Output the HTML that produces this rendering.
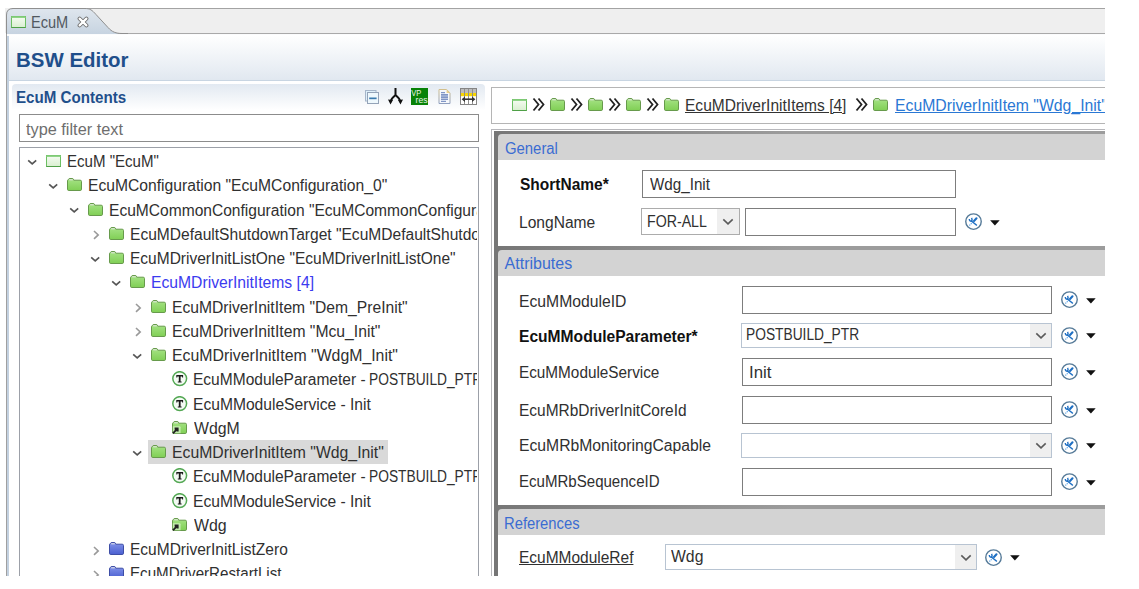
<!DOCTYPE html><html><head><meta charset="utf-8"><style>html,body{margin:0;padding:0;background:#fff;width:1139px;height:589px;overflow:hidden;font-family:"Liberation Sans", sans-serif;} #root{position:relative;width:1139px;height:589px;overflow:hidden} svg{display:block} .t{position:absolute;white-space:pre;transform-origin:0 0}</style></head><body><div id="root">
<div style="position:absolute;left:5px;top:8px;width:1100px;height:25px;background:#efefef"></div>
<div style="position:absolute;left:6px;top:33px;width:1099px;height:1px;background:#a9a9a9"></div>
<div style="position:absolute;left:12px;top:8px;width:1093px;height:1px;background:#a3a3a3"></div>
<svg style="position:absolute;left:6px;top:8px" width="122" height="27" viewBox="0 0 122 27"><defs><linearGradient id="tabg" x1="0" y1="0" x2="0" y2="1"><stop offset="0" stop-color="#dfe6ee"/><stop offset="1" stop-color="#c6d3e0"/></linearGradient></defs><path d="M0 27 L0 7 Q0 0.5 6.5 0.5 L79 0.5 C84 0.5 86 2 90 6.5 L102 19.5 C106 24 110 25.5 116 25.5 L122 25.5 L122 27 Z" fill="url(#tabg)"/><path d="M0.5 27 L0.5 7 Q0.5 0.5 7 0.5 L79 0.5 C84 0.5 86 2 90 6.5 L102 19.5 C106 24 110 25.5 116 25.5 L122 25.5" fill="none" stroke="#8f8f8f" stroke-width="1"/></svg>
<svg style="position:absolute;left:11px;top:16px" width="15" height="12" viewBox="0 0 15 12"><defs><linearGradient id="mg" x1="0" y1="0" x2="0" y2="1"><stop offset="0" stop-color="#f6fcf3"/><stop offset="1" stop-color="#d9efd0"/></linearGradient></defs><rect x="0.5" y="0.5" width="14" height="11" fill="url(#mg)" stroke="#6cbf62"/><rect x="0.5" y="0.5" width="14" height="1.5" fill="#8fd487"/><line x1="0.5" y1="11.5" x2="14.5" y2="11.5" stroke="#4f9f47"/></svg>
<div class="t" style="left:31.09px;top:15px;font-size:16px;line-height:16px;font-weight:400;color:#515860;transform:scaleX(0.9098);">EcuM</div>
<svg style="position:absolute;left:77px;top:16px" width="12" height="12" viewBox="0 0 12 12"><path d="M2.6 2.6 L9.4 9.4 M9.4 2.6 L2.6 9.4" stroke="#6e6e6e" stroke-width="4" stroke-linecap="round"/><path d="M2.6 2.6 L9.4 9.4 M9.4 2.6 L2.6 9.4" stroke="#fff" stroke-width="2.2" stroke-linecap="round"/></svg>
<div style="position:absolute;left:6px;top:34px;width:1px;height:542px;background:#a0a0a0"></div>
<div style="position:absolute;left:7px;top:34px;width:1098px;height:2px;background:#fbfcfd"></div>
<div style="position:absolute;left:7px;top:36px;width:2px;height:540px;background:#c3d1e0"></div>
<div style="position:absolute;left:9px;top:35px;width:1096px;height:45px;background:linear-gradient(#ffffff,#e1e8f0)"></div>
<div style="position:absolute;left:9px;top:80px;width:1096px;height:1px;background:#c8d5e2"></div>
<div class="t" style="left:15.53px;top:49px;font-size:21px;line-height:21px;font-weight:700;color:#1f4f8b;transform:scaleX(0.9736);">BSW Editor</div>
<div style="position:absolute;left:12px;top:84px;width:473px;height:26px;background:linear-gradient(#e2e9f1,#ffffff);border-radius:4px 4px 0 0"></div>
<div class="t" style="left:16.15px;top:90px;font-size:16px;line-height:16px;font-weight:700;color:#1f4f8b;transform:scaleX(0.9459);">EcuM Contents</div>
<svg style="position:absolute;left:365px;top:90px" width="15" height="15" viewBox="0 0 15 15"><rect x="0.5" y="0.5" width="10.5" height="10.5" fill="#dff0fa" stroke="#a6b6ca"/><rect x="2.5" y="2.5" width="11" height="11" fill="#eef8fd" stroke="#94a3b8"/><rect x="4.2" y="7.5" width="7.4" height="1.7" fill="#3b7aae"/></svg>
<svg style="position:absolute;left:388px;top:88px" width="15" height="17" viewBox="0 0 15 17"><path d="M7.5 0 V7 M7.5 7 C5 9 3 11 2.5 14 M7.5 7 C10 9 12 11 12.5 14" fill="none" stroke="#111" stroke-width="2"/><path d="M0 11.5 L2.5 16.5 L5 12 Z M15 11.5 L12.5 16.5 L10 12 Z" fill="#111"/></svg>
<svg style="position:absolute;left:411px;top:88px" width="17" height="17" viewBox="0 0 17 17"><rect width="17" height="17" fill="#078207"/><text x="0.3" y="7.6" font-family="Liberation Sans" font-size="9" fill="#e8f4e8" textLength="10" lengthAdjust="spacingAndGlyphs">VP</text><text x="4.6" y="15.4" font-family="Liberation Sans" font-size="9" fill="#e8f4e8" textLength="12" lengthAdjust="spacingAndGlyphs">res</text></svg>
<svg style="position:absolute;left:438px;top:89px" width="13" height="15" viewBox="0 0 13 15"><defs><linearGradient id="dg" x1="0" y1="0" x2="0" y2="1"><stop offset="0" stop-color="#d2bf8c"/><stop offset="1" stop-color="#8f9fbf"/></linearGradient></defs><path d="M1 0.5 H8.6 L12 3.9 V14.5 H1 Z" fill="#f6f8fc" stroke="url(#dg)"/><path d="M8.6 0.5 V3.9 H12 Z" fill="#e9cf8e"/><path d="M3 3.6 H7 M3 5.6 H10 M3 7.1 H10 M3 8.6 H10 M3 10.4 H10 M3 12.4 H8" stroke="#8196c6" stroke-width="1.3"/></svg>
<svg style="position:absolute;left:460px;top:88px" width="17" height="17" viewBox="0 0 17 17"><rect x="0.5" y="0.5" width="16" height="16" fill="#fff" stroke="#858585"/><rect x="1" y="1" width="15" height="4" fill="#bdbdbd"/><rect x="1" y="5" width="15" height="3.2" fill="#f7d500"/><path d="M4.5 1 V16 M8.5 1 V16 M12.5 1 V16" stroke="#8f8f8f" stroke-width="1"/><path d="M3 11.2 H14" stroke="#333" stroke-width="1.6"/><path d="M1.6 11.2 L5 8.4 V14 Z M15.4 11.2 L12 8.4 V14 Z" fill="#333"/></svg>
<div style="position:absolute;left:19px;top:114px;width:460px;height:28px;border:1px solid #8c8c8c;box-sizing:border-box;background:#fff"></div>
<div class="t" style="left:26.30px;top:122px;font-size:16px;line-height:16px;font-weight:400;color:#6e6e6e;transform:scaleX(1.0188);">type filter text</div>
<div style="position:absolute;left:19px;top:147px;width:460px;height:440px;border:1px solid #9ca0a8;box-sizing:border-box;background:#fff"></div>
<div style="position:absolute;left:20px;top:148px;width:457px;height:428px;overflow:hidden">
<svg style="position:absolute;left:7px;top:11px" width="11" height="7" viewBox="0 0 11 7"><path d="M1.2 1.4 L5.2 4.8 L9.2 1.4" fill="none" stroke="#555" stroke-width="1.7"/></svg>
<svg style="position:absolute;left:26px;top:7px" width="15" height="12" viewBox="0 0 15 12"><defs><linearGradient id="mg" x1="0" y1="0" x2="0" y2="1"><stop offset="0" stop-color="#f6fcf3"/><stop offset="1" stop-color="#d9efd0"/></linearGradient></defs><rect x="0.5" y="0.5" width="14" height="11" fill="url(#mg)" stroke="#6cbf62"/><rect x="0.5" y="0.5" width="14" height="1.5" fill="#8fd487"/><line x1="0.5" y1="11.5" x2="14.5" y2="11.5" stroke="#4f9f47"/></svg>
<div class="t" style="left:46.96px;top:6px;font-size:16px;line-height:16px;font-weight:400;color:#303030;transform:scaleX(0.9414);">EcuM &quot;EcuM&quot;</div>
<svg style="position:absolute;left:28px;top:35px" width="11" height="7" viewBox="0 0 11 7"><path d="M1.2 1.4 L5.2 4.8 L9.2 1.4" fill="none" stroke="#555" stroke-width="1.7"/></svg>
<svg style="position:absolute;left:47px;top:30px" width="15" height="13" viewBox="0 0 15 13"><defs><linearGradient id="fg" x1="0" y1="0" x2="0" y2="1"><stop offset="0" stop-color="#a6e386"/><stop offset="1" stop-color="#80cf55"/></linearGradient></defs><path d="M0.5 2.8 Q0.5 1.6 1.6 1.4 L2.2 0.5 L5.8 0.5 L6.8 2.2 L13.2 2.2 Q14.5 2.2 14.5 3.6 L14.5 11.2 Q14.5 12.5 13.2 12.5 L1.8 12.5 Q0.5 12.5 0.5 11.2 Z" fill="url(#fg)" stroke="#679a4c"/><rect x="2.2" y="1.3" width="3.6" height="1" fill="#e4e4e4"/></svg>
<div class="t" style="left:67.92px;top:30px;font-size:16px;line-height:16px;font-weight:400;color:#303030;transform:scaleX(0.9787);">EcuMConfiguration &quot;EcuMConfiguration_0&quot;</div>
<svg style="position:absolute;left:49px;top:59px" width="11" height="7" viewBox="0 0 11 7"><path d="M1.2 1.4 L5.2 4.8 L9.2 1.4" fill="none" stroke="#555" stroke-width="1.7"/></svg>
<svg style="position:absolute;left:68px;top:55px" width="15" height="13" viewBox="0 0 15 13"><defs><linearGradient id="fg" x1="0" y1="0" x2="0" y2="1"><stop offset="0" stop-color="#a6e386"/><stop offset="1" stop-color="#80cf55"/></linearGradient></defs><path d="M0.5 2.8 Q0.5 1.6 1.6 1.4 L2.2 0.5 L5.8 0.5 L6.8 2.2 L13.2 2.2 Q14.5 2.2 14.5 3.6 L14.5 11.2 Q14.5 12.5 13.2 12.5 L1.8 12.5 Q0.5 12.5 0.5 11.2 Z" fill="url(#fg)" stroke="#679a4c"/><rect x="2.2" y="1.3" width="3.6" height="1" fill="#e4e4e4"/></svg>
<div class="t" style="left:88.93px;top:55px;font-size:16px;line-height:16px;font-weight:400;color:#303030;transform:scaleX(0.9730);">EcuMCommonConfiguration &quot;EcuMCommonConfiguration_0&quot;</div>
<svg style="position:absolute;left:72.5px;top:82px" width="7" height="11" viewBox="0 0 7 11"><path d="M1 1 L5.2 4.9 L1 8.8" fill="none" stroke="#9a9a9a" stroke-width="1.6"/></svg>
<svg style="position:absolute;left:89px;top:79px" width="15" height="13" viewBox="0 0 15 13"><defs><linearGradient id="fg" x1="0" y1="0" x2="0" y2="1"><stop offset="0" stop-color="#a6e386"/><stop offset="1" stop-color="#80cf55"/></linearGradient></defs><path d="M0.5 2.8 Q0.5 1.6 1.6 1.4 L2.2 0.5 L5.8 0.5 L6.8 2.2 L13.2 2.2 Q14.5 2.2 14.5 3.6 L14.5 11.2 Q14.5 12.5 13.2 12.5 L1.8 12.5 Q0.5 12.5 0.5 11.2 Z" fill="url(#fg)" stroke="#679a4c"/><rect x="2.2" y="1.3" width="3.6" height="1" fill="#e4e4e4"/></svg>
<div class="t" style="left:109.93px;top:79px;font-size:16px;line-height:16px;font-weight:400;color:#303030;transform:scaleX(0.9730);">EcuMDefaultShutdownTarget &quot;EcuMDefaultShutdownTarget&quot;</div>
<svg style="position:absolute;left:70px;top:108px" width="11" height="7" viewBox="0 0 11 7"><path d="M1.2 1.4 L5.2 4.8 L9.2 1.4" fill="none" stroke="#555" stroke-width="1.7"/></svg>
<svg style="position:absolute;left:89px;top:103px" width="15" height="13" viewBox="0 0 15 13"><defs><linearGradient id="fg" x1="0" y1="0" x2="0" y2="1"><stop offset="0" stop-color="#a6e386"/><stop offset="1" stop-color="#80cf55"/></linearGradient></defs><path d="M0.5 2.8 Q0.5 1.6 1.6 1.4 L2.2 0.5 L5.8 0.5 L6.8 2.2 L13.2 2.2 Q14.5 2.2 14.5 3.6 L14.5 11.2 Q14.5 12.5 13.2 12.5 L1.8 12.5 Q0.5 12.5 0.5 11.2 Z" fill="url(#fg)" stroke="#679a4c"/><rect x="2.2" y="1.3" width="3.6" height="1" fill="#e4e4e4"/></svg>
<div class="t" style="left:109.93px;top:103px;font-size:16px;line-height:16px;font-weight:400;color:#303030;transform:scaleX(0.9691);">EcuMDriverInitListOne &quot;EcuMDriverInitListOne&quot;</div>
<svg style="position:absolute;left:91px;top:132px" width="11" height="7" viewBox="0 0 11 7"><path d="M1.2 1.4 L5.2 4.8 L9.2 1.4" fill="none" stroke="#555" stroke-width="1.7"/></svg>
<svg style="position:absolute;left:110px;top:127px" width="15" height="13" viewBox="0 0 15 13"><defs><linearGradient id="fg" x1="0" y1="0" x2="0" y2="1"><stop offset="0" stop-color="#a6e386"/><stop offset="1" stop-color="#80cf55"/></linearGradient></defs><path d="M0.5 2.8 Q0.5 1.6 1.6 1.4 L2.2 0.5 L5.8 0.5 L6.8 2.2 L13.2 2.2 Q14.5 2.2 14.5 3.6 L14.5 11.2 Q14.5 12.5 13.2 12.5 L1.8 12.5 Q0.5 12.5 0.5 11.2 Z" fill="url(#fg)" stroke="#679a4c"/><rect x="2.2" y="1.3" width="3.6" height="1" fill="#e4e4e4"/></svg>
<div class="t" style="left:130.92px;top:127px;font-size:16px;line-height:16px;font-weight:400;color:#3b3bef;transform:scaleX(0.9805);">EcuMDriverInitItems [4]</div>
<svg style="position:absolute;left:114.5px;top:155px" width="7" height="11" viewBox="0 0 7 11"><path d="M1 1 L5.2 4.9 L1 8.8" fill="none" stroke="#9a9a9a" stroke-width="1.6"/></svg>
<svg style="position:absolute;left:131px;top:152px" width="15" height="13" viewBox="0 0 15 13"><defs><linearGradient id="fg" x1="0" y1="0" x2="0" y2="1"><stop offset="0" stop-color="#a6e386"/><stop offset="1" stop-color="#80cf55"/></linearGradient></defs><path d="M0.5 2.8 Q0.5 1.6 1.6 1.4 L2.2 0.5 L5.8 0.5 L6.8 2.2 L13.2 2.2 Q14.5 2.2 14.5 3.6 L14.5 11.2 Q14.5 12.5 13.2 12.5 L1.8 12.5 Q0.5 12.5 0.5 11.2 Z" fill="url(#fg)" stroke="#679a4c"/><rect x="2.2" y="1.3" width="3.6" height="1" fill="#e4e4e4"/></svg>
<div class="t" style="left:151.92px;top:152px;font-size:16px;line-height:16px;font-weight:400;color:#303030;transform:scaleX(0.9788);">EcuMDriverInitItem &quot;Dem_PreInit&quot;</div>
<svg style="position:absolute;left:114.5px;top:179px" width="7" height="11" viewBox="0 0 7 11"><path d="M1 1 L5.2 4.9 L1 8.8" fill="none" stroke="#9a9a9a" stroke-width="1.6"/></svg>
<svg style="position:absolute;left:131px;top:176px" width="15" height="13" viewBox="0 0 15 13"><defs><linearGradient id="fg" x1="0" y1="0" x2="0" y2="1"><stop offset="0" stop-color="#a6e386"/><stop offset="1" stop-color="#80cf55"/></linearGradient></defs><path d="M0.5 2.8 Q0.5 1.6 1.6 1.4 L2.2 0.5 L5.8 0.5 L6.8 2.2 L13.2 2.2 Q14.5 2.2 14.5 3.6 L14.5 11.2 Q14.5 12.5 13.2 12.5 L1.8 12.5 Q0.5 12.5 0.5 11.2 Z" fill="url(#fg)" stroke="#679a4c"/><rect x="2.2" y="1.3" width="3.6" height="1" fill="#e4e4e4"/></svg>
<div class="t" style="left:151.92px;top:176px;font-size:16px;line-height:16px;font-weight:400;color:#303030;transform:scaleX(0.9814);">EcuMDriverInitItem &quot;Mcu_Init&quot;</div>
<svg style="position:absolute;left:112px;top:205px" width="11" height="7" viewBox="0 0 11 7"><path d="M1.2 1.4 L5.2 4.8 L9.2 1.4" fill="none" stroke="#555" stroke-width="1.7"/></svg>
<svg style="position:absolute;left:131px;top:200px" width="15" height="13" viewBox="0 0 15 13"><defs><linearGradient id="fg" x1="0" y1="0" x2="0" y2="1"><stop offset="0" stop-color="#a6e386"/><stop offset="1" stop-color="#80cf55"/></linearGradient></defs><path d="M0.5 2.8 Q0.5 1.6 1.6 1.4 L2.2 0.5 L5.8 0.5 L6.8 2.2 L13.2 2.2 Q14.5 2.2 14.5 3.6 L14.5 11.2 Q14.5 12.5 13.2 12.5 L1.8 12.5 Q0.5 12.5 0.5 11.2 Z" fill="url(#fg)" stroke="#679a4c"/><rect x="2.2" y="1.3" width="3.6" height="1" fill="#e4e4e4"/></svg>
<div class="t" style="left:151.91px;top:200px;font-size:16px;line-height:16px;font-weight:400;color:#303030;transform:scaleX(0.9898);">EcuMDriverInitItem &quot;WdgM_Init&quot;</div>
<svg style="position:absolute;left:152px;top:223px" width="16" height="16" viewBox="0 0 16 16"><circle cx="7.7" cy="7.6" r="6.9" fill="#f4fbf4" stroke="#54a854" stroke-width="1.5"/><path d="M4.3 4.0 H11.1 V6.6 H10.1 V5.4 H8.6 V10.4 H9.6 V11.4 H5.8 V10.4 H6.8 V5.4 H5.3 V6.6 H4.3 Z" fill="#1a1a1a"/></svg>
<div class="t" style="left:172.93px;top:224px;font-size:16px;line-height:16px;font-weight:400;color:#303030;transform:scaleX(0.9705);">EcuMModuleParameter -</div>
<div class="t" style="left:349.44px;top:224px;font-size:16px;line-height:16px;font-weight:400;color:#303030;transform:scaleX(0.8598);">POSTBUILD_PTR</div>
<svg style="position:absolute;left:152px;top:248px" width="16" height="16" viewBox="0 0 16 16"><circle cx="7.7" cy="7.6" r="6.9" fill="#f4fbf4" stroke="#54a854" stroke-width="1.5"/><path d="M4.3 4.0 H11.1 V6.6 H10.1 V5.4 H8.6 V10.4 H9.6 V11.4 H5.8 V10.4 H6.8 V5.4 H5.3 V6.6 H4.3 Z" fill="#1a1a1a"/></svg>
<div class="t" style="left:172.92px;top:249px;font-size:16px;line-height:16px;font-weight:400;color:#303030;transform:scaleX(0.9756);">EcuMModuleService - Init</div>
<svg style="position:absolute;left:152px;top:273px" width="15" height="13" viewBox="0 0 15 13"><defs><linearGradient id="fl" x1="0" y1="0" x2="0" y2="1"><stop offset="0" stop-color="#a6e386"/><stop offset="1" stop-color="#80cf55"/></linearGradient></defs><path d="M0.5 2.8 Q0.5 1.6 1.6 1.4 L2.2 0.5 L5.8 0.5 L6.8 2.2 L13.2 2.2 Q14.5 2.2 14.5 3.6 L14.5 11.2 Q14.5 12.5 13.2 12.5 L1.8 12.5 Q0.5 12.5 0.5 11.2 Z" fill="url(#fl)" stroke="#679a4c"/><rect x="2.2" y="1.3" width="3.6" height="1" fill="#e4e4e4"/><path d="M0.8 5.2 H7.6 Q8.6 5.2 8.6 6.2 V12.2 H0.8 Z" fill="#d4f4c4" opacity="0.75"/><path d="M2.6 6.6 H6.6 V10.6 H4.8 L2.6 8.4 Z" fill="#222"/><path d="M0.9 12.3 L4.8 8.4" stroke="#222" stroke-width="1.9"/></svg>
<div class="t" style="left:173.90px;top:273px;font-size:16px;line-height:16px;font-weight:400;color:#303030;transform:scaleX(0.9891);">WdgM</div>
<div style="position:absolute;left:128px;top:292px;width:240px;height:24px;background:#d9d9d9"></div>
<svg style="position:absolute;left:112px;top:302px" width="11" height="7" viewBox="0 0 11 7"><path d="M1.2 1.4 L5.2 4.8 L9.2 1.4" fill="none" stroke="#555" stroke-width="1.7"/></svg>
<svg style="position:absolute;left:131px;top:297px" width="15" height="13" viewBox="0 0 15 13"><defs><linearGradient id="fg" x1="0" y1="0" x2="0" y2="1"><stop offset="0" stop-color="#a6e386"/><stop offset="1" stop-color="#80cf55"/></linearGradient></defs><path d="M0.5 2.8 Q0.5 1.6 1.6 1.4 L2.2 0.5 L5.8 0.5 L6.8 2.2 L13.2 2.2 Q14.5 2.2 14.5 3.6 L14.5 11.2 Q14.5 12.5 13.2 12.5 L1.8 12.5 Q0.5 12.5 0.5 11.2 Z" fill="url(#fg)" stroke="#679a4c"/><rect x="2.2" y="1.3" width="3.6" height="1" fill="#e4e4e4"/></svg>
<div class="t" style="left:151.91px;top:297px;font-size:16px;line-height:16px;font-weight:400;color:#303030;transform:scaleX(0.9850);">EcuMDriverInitItem &quot;Wdg_Init&quot;</div>
<svg style="position:absolute;left:152px;top:320px" width="16" height="16" viewBox="0 0 16 16"><circle cx="7.7" cy="7.6" r="6.9" fill="#f4fbf4" stroke="#54a854" stroke-width="1.5"/><path d="M4.3 4.0 H11.1 V6.6 H10.1 V5.4 H8.6 V10.4 H9.6 V11.4 H5.8 V10.4 H6.8 V5.4 H5.3 V6.6 H4.3 Z" fill="#1a1a1a"/></svg>
<div class="t" style="left:172.93px;top:321px;font-size:16px;line-height:16px;font-weight:400;color:#303030;transform:scaleX(0.9705);">EcuMModuleParameter -</div>
<div class="t" style="left:349.44px;top:321px;font-size:16px;line-height:16px;font-weight:400;color:#303030;transform:scaleX(0.8598);">POSTBUILD_PTR</div>
<svg style="position:absolute;left:152px;top:345px" width="16" height="16" viewBox="0 0 16 16"><circle cx="7.7" cy="7.6" r="6.9" fill="#f4fbf4" stroke="#54a854" stroke-width="1.5"/><path d="M4.3 4.0 H11.1 V6.6 H10.1 V5.4 H8.6 V10.4 H9.6 V11.4 H5.8 V10.4 H6.8 V5.4 H5.3 V6.6 H4.3 Z" fill="#1a1a1a"/></svg>
<div class="t" style="left:172.92px;top:346px;font-size:16px;line-height:16px;font-weight:400;color:#303030;transform:scaleX(0.9756);">EcuMModuleService - Init</div>
<svg style="position:absolute;left:152px;top:370px" width="15" height="13" viewBox="0 0 15 13"><defs><linearGradient id="fl" x1="0" y1="0" x2="0" y2="1"><stop offset="0" stop-color="#a6e386"/><stop offset="1" stop-color="#80cf55"/></linearGradient></defs><path d="M0.5 2.8 Q0.5 1.6 1.6 1.4 L2.2 0.5 L5.8 0.5 L6.8 2.2 L13.2 2.2 Q14.5 2.2 14.5 3.6 L14.5 11.2 Q14.5 12.5 13.2 12.5 L1.8 12.5 Q0.5 12.5 0.5 11.2 Z" fill="url(#fl)" stroke="#679a4c"/><rect x="2.2" y="1.3" width="3.6" height="1" fill="#e4e4e4"/><path d="M0.8 5.2 H7.6 Q8.6 5.2 8.6 6.2 V12.2 H0.8 Z" fill="#d4f4c4" opacity="0.75"/><path d="M2.6 6.6 H6.6 V10.6 H4.8 L2.6 8.4 Z" fill="#222"/><path d="M0.9 12.3 L4.8 8.4" stroke="#222" stroke-width="1.9"/></svg>
<div class="t" style="left:173.90px;top:370px;font-size:16px;line-height:16px;font-weight:400;color:#303030;transform:scaleX(0.9938);">Wdg</div>
<svg style="position:absolute;left:72.5px;top:398px" width="7" height="11" viewBox="0 0 7 11"><path d="M1 1 L5.2 4.9 L1 8.8" fill="none" stroke="#9a9a9a" stroke-width="1.6"/></svg>
<svg style="position:absolute;left:89px;top:394px" width="15" height="13" viewBox="0 0 15 13"><defs><linearGradient id="fb" x1="0" y1="0" x2="0" y2="1"><stop offset="0" stop-color="#8394ea"/><stop offset="1" stop-color="#4a5fd0"/></linearGradient></defs><path d="M0.5 2.8 Q0.5 1.6 1.6 1.4 L2.2 0.5 L5.8 0.5 L6.8 2.2 L13.2 2.2 Q14.5 2.2 14.5 3.6 L14.5 11.2 Q14.5 12.5 13.2 12.5 L1.8 12.5 Q0.5 12.5 0.5 11.2 Z" fill="url(#fb)" stroke="#3e4ea6"/><rect x="2.2" y="1.3" width="3.6" height="1" fill="#e4e4e4"/></svg>
<div class="t" style="left:109.93px;top:394px;font-size:16px;line-height:16px;font-weight:400;color:#303030;transform:scaleX(0.9697);">EcuMDriverInitListZero</div>
<svg style="position:absolute;left:72.5px;top:422px" width="7" height="11" viewBox="0 0 7 11"><path d="M1 1 L5.2 4.9 L1 8.8" fill="none" stroke="#9a9a9a" stroke-width="1.6"/></svg>
<svg style="position:absolute;left:89px;top:418px" width="15" height="13" viewBox="0 0 15 13"><defs><linearGradient id="fb" x1="0" y1="0" x2="0" y2="1"><stop offset="0" stop-color="#8394ea"/><stop offset="1" stop-color="#4a5fd0"/></linearGradient></defs><path d="M0.5 2.8 Q0.5 1.6 1.6 1.4 L2.2 0.5 L5.8 0.5 L6.8 2.2 L13.2 2.2 Q14.5 2.2 14.5 3.6 L14.5 11.2 Q14.5 12.5 13.2 12.5 L1.8 12.5 Q0.5 12.5 0.5 11.2 Z" fill="url(#fb)" stroke="#3e4ea6"/><rect x="2.2" y="1.3" width="3.6" height="1" fill="#e4e4e4"/></svg>
<div class="t" style="left:109.95px;top:418px;font-size:16px;line-height:16px;font-weight:400;color:#303030;transform:scaleX(0.9468);">EcuMDriverRestartList</div>
</div>
<div style="position:absolute;left:491px;top:87px;width:620px;height:37px;border:1px solid #b5b5b5;box-sizing:border-box;background:#fff"></div>
<svg style="position:absolute;left:512px;top:99px" width="15" height="12" viewBox="0 0 15 12"><defs><linearGradient id="mg" x1="0" y1="0" x2="0" y2="1"><stop offset="0" stop-color="#f6fcf3"/><stop offset="1" stop-color="#d9efd0"/></linearGradient></defs><rect x="0.5" y="0.5" width="14" height="11" fill="url(#mg)" stroke="#6cbf62"/><rect x="0.5" y="0.5" width="14" height="1.5" fill="#8fd487"/><line x1="0.5" y1="11.5" x2="14.5" y2="11.5" stroke="#4f9f47"/></svg>
<svg style="position:absolute;left:532px;top:97px" width="13" height="15" viewBox="0 0 13 15"><path d="M1.5 1.5 L6.5 7.5 L1.5 13.5 M6.5 1.5 L11.5 7.5 L6.5 13.5" fill="none" stroke="#222" stroke-width="1.8"/></svg>
<svg style="position:absolute;left:550px;top:98px" width="15" height="13" viewBox="0 0 15 13"><defs><linearGradient id="fg" x1="0" y1="0" x2="0" y2="1"><stop offset="0" stop-color="#a6e386"/><stop offset="1" stop-color="#80cf55"/></linearGradient></defs><path d="M0.5 2.8 Q0.5 1.6 1.6 1.4 L2.2 0.5 L5.8 0.5 L6.8 2.2 L13.2 2.2 Q14.5 2.2 14.5 3.6 L14.5 11.2 Q14.5 12.5 13.2 12.5 L1.8 12.5 Q0.5 12.5 0.5 11.2 Z" fill="url(#fg)" stroke="#679a4c"/><rect x="2.2" y="1.3" width="3.6" height="1" fill="#e4e4e4"/></svg>
<svg style="position:absolute;left:570px;top:97px" width="13" height="15" viewBox="0 0 13 15"><path d="M1.5 1.5 L6.5 7.5 L1.5 13.5 M6.5 1.5 L11.5 7.5 L6.5 13.5" fill="none" stroke="#222" stroke-width="1.8"/></svg>
<svg style="position:absolute;left:588px;top:98px" width="15" height="13" viewBox="0 0 15 13"><defs><linearGradient id="fg" x1="0" y1="0" x2="0" y2="1"><stop offset="0" stop-color="#a6e386"/><stop offset="1" stop-color="#80cf55"/></linearGradient></defs><path d="M0.5 2.8 Q0.5 1.6 1.6 1.4 L2.2 0.5 L5.8 0.5 L6.8 2.2 L13.2 2.2 Q14.5 2.2 14.5 3.6 L14.5 11.2 Q14.5 12.5 13.2 12.5 L1.8 12.5 Q0.5 12.5 0.5 11.2 Z" fill="url(#fg)" stroke="#679a4c"/><rect x="2.2" y="1.3" width="3.6" height="1" fill="#e4e4e4"/></svg>
<svg style="position:absolute;left:608px;top:97px" width="13" height="15" viewBox="0 0 13 15"><path d="M1.5 1.5 L6.5 7.5 L1.5 13.5 M6.5 1.5 L11.5 7.5 L6.5 13.5" fill="none" stroke="#222" stroke-width="1.8"/></svg>
<svg style="position:absolute;left:626px;top:98px" width="15" height="13" viewBox="0 0 15 13"><defs><linearGradient id="fg" x1="0" y1="0" x2="0" y2="1"><stop offset="0" stop-color="#a6e386"/><stop offset="1" stop-color="#80cf55"/></linearGradient></defs><path d="M0.5 2.8 Q0.5 1.6 1.6 1.4 L2.2 0.5 L5.8 0.5 L6.8 2.2 L13.2 2.2 Q14.5 2.2 14.5 3.6 L14.5 11.2 Q14.5 12.5 13.2 12.5 L1.8 12.5 Q0.5 12.5 0.5 11.2 Z" fill="url(#fg)" stroke="#679a4c"/><rect x="2.2" y="1.3" width="3.6" height="1" fill="#e4e4e4"/></svg>
<svg style="position:absolute;left:646px;top:97px" width="13" height="15" viewBox="0 0 13 15"><path d="M1.5 1.5 L6.5 7.5 L1.5 13.5 M6.5 1.5 L11.5 7.5 L6.5 13.5" fill="none" stroke="#222" stroke-width="1.8"/></svg>
<svg style="position:absolute;left:664px;top:98px" width="15" height="13" viewBox="0 0 15 13"><defs><linearGradient id="fg" x1="0" y1="0" x2="0" y2="1"><stop offset="0" stop-color="#a6e386"/><stop offset="1" stop-color="#80cf55"/></linearGradient></defs><path d="M0.5 2.8 Q0.5 1.6 1.6 1.4 L2.2 0.5 L5.8 0.5 L6.8 2.2 L13.2 2.2 Q14.5 2.2 14.5 3.6 L14.5 11.2 Q14.5 12.5 13.2 12.5 L1.8 12.5 Q0.5 12.5 0.5 11.2 Z" fill="url(#fg)" stroke="#679a4c"/><rect x="2.2" y="1.3" width="3.6" height="1" fill="#e4e4e4"/></svg>
<div class="t" style="left:685.43px;top:98px;font-size:16px;line-height:16px;font-weight:400;color:#333;transform:scaleX(0.9708);text-decoration:underline">EcuMDriverInitItems [4]</div>
<svg style="position:absolute;left:855px;top:97px" width="13" height="15" viewBox="0 0 13 15"><path d="M1.5 1.5 L6.5 7.5 L1.5 13.5 M6.5 1.5 L11.5 7.5 L6.5 13.5" fill="none" stroke="#222" stroke-width="1.8"/></svg>
<svg style="position:absolute;left:873px;top:98px" width="15" height="13" viewBox="0 0 15 13"><defs><linearGradient id="fg" x1="0" y1="0" x2="0" y2="1"><stop offset="0" stop-color="#a6e386"/><stop offset="1" stop-color="#80cf55"/></linearGradient></defs><path d="M0.5 2.8 Q0.5 1.6 1.6 1.4 L2.2 0.5 L5.8 0.5 L6.8 2.2 L13.2 2.2 Q14.5 2.2 14.5 3.6 L14.5 11.2 Q14.5 12.5 13.2 12.5 L1.8 12.5 Q0.5 12.5 0.5 11.2 Z" fill="url(#fg)" stroke="#679a4c"/><rect x="2.2" y="1.3" width="3.6" height="1" fill="#e4e4e4"/></svg>
<div class="t" style="left:894.71px;top:98px;font-size:16px;line-height:16px;font-weight:400;color:#2a78d4;transform:scaleX(0.9850);text-decoration:underline">EcuMDriverInitItem &quot;Wdg_Init&quot;</div>
<div style="position:absolute;left:491px;top:129px;width:620px;height:460px;border:1px solid #b8b8bc;box-sizing:border-box;background:#fff"></div>
<div style="position:absolute;left:494px;top:131px;width:620px;height:460px;background:linear-gradient(to right,#767676 0px,#8a8a8a 150px,#9c9c9c 300px,#9c9c9c 620px)"></div>
<div style="position:absolute;left:494px;top:131px;width:4px;height:460px;background:#767676"></div>
<div style="position:absolute;left:498px;top:134px;width:620px;height:26px;background:#d3d3d3;border-radius:4px 0 0 0"></div>
<div class="t" style="left:504.60px;top:141px;font-size:16px;line-height:16px;font-weight:400;color:#3a6cd2;transform:scaleX(0.9296);">General</div>
<div style="position:absolute;left:498px;top:160px;width:620px;height:86px;background:#fff"></div>
<div style="position:absolute;left:498px;top:250px;width:620px;height:26px;background:#d3d3d3;border-radius:4px 0 0 0"></div>
<div class="t" style="left:504.60px;top:256px;font-size:16px;line-height:16px;font-weight:400;color:#3a6cd2;">Attributes</div>
<div style="position:absolute;left:498px;top:276px;width:620px;height:229px;background:#fff"></div>
<div style="position:absolute;left:498px;top:509px;width:620px;height:26px;background:#d3d3d3;border-radius:4px 0 0 0"></div>
<div class="t" style="left:503.68px;top:516px;font-size:16px;line-height:16px;font-weight:400;color:#3a6cd2;transform:scaleX(0.9230);">References</div>
<div style="position:absolute;left:498px;top:535px;width:620px;height:65px;background:#fff"></div>
<div class="t" style="left:520.20px;top:177px;font-size:16px;line-height:16px;font-weight:700;color:#111;transform:scaleX(0.9691);">ShortName*</div>
<div style="position:absolute;left:642px;top:170px;width:314px;height:28px;border:1px solid #7d7d7d;box-sizing:border-box;background:#fff"></div>
<div class="t" style="left:649.70px;top:177px;font-size:16px;line-height:16px;font-weight:400;color:#303030;transform:scaleX(0.9498);">Wdg_Init</div>
<div class="t" style="left:519.23px;top:215px;font-size:16px;line-height:16px;font-weight:400;color:#303030;transform:scaleX(0.9732);">LongName</div>
<div style="position:absolute;left:641px;top:208px;width:99px;height:27px;border:1px solid #acacac;box-sizing:border-box;background:#fff"></div>
<div style="position:absolute;left:717px;top:209px;width:22px;height:25px;background:#efefef"></div>
<svg style="position:absolute;left:721.5px;top:218.0px" width="12" height="8" viewBox="0 0 12 8"><path d="M1.3 1.4 L6 5.9 L10.7 1.4" fill="none" stroke="#5a5a5a" stroke-width="1.6"/></svg>
<div class="t" style="left:646.81px;top:214px;font-size:16px;line-height:16px;font-weight:400;color:#303030;transform:scaleX(0.8864);">FOR-ALL</div>
<div style="position:absolute;left:745px;top:208px;width:211px;height:28px;border:1px solid #7d7d7d;box-sizing:border-box;background:#fff"></div>
<svg style="position:absolute;left:965px;top:213px" width="18" height="18" viewBox="0 0 18 18"><circle cx="8.5" cy="8.6" r="7.75" fill="#fff" stroke="#557a98" stroke-width="1.4"/><path d="M6.4 8.0 L11.4 12.0" stroke="#1f70c4" stroke-width="1.6" stroke-linecap="round"/><path d="M4.3 6.0 Q4.4 8.4 6.5 8.3 Q7.6 7.0 6.6 4.9" fill="none" stroke="#1f70c4" stroke-width="1.4"/><path d="M4.4 12.5 L7.2 9.7" stroke="#5aa4e8" stroke-width="1.1" stroke-dasharray="1.2 0.8"/><path d="M9.0 8.0 L11.5 5.3" stroke="#1f70c4" stroke-width="2.1" stroke-linecap="round"/></svg>
<svg style="position:absolute;left:990px;top:219.5px" width="11" height="6" viewBox="0 0 11 6"><path d="M0.1 0.3 L9.7 0.3 L4.9 5.4 Z" fill="#111"/></svg>
<div class="t" style="left:519.22px;top:294px;font-size:16px;line-height:16px;font-weight:400;color:#303030;transform:scaleX(0.9822);">EcuMModuleID</div>
<div style="position:absolute;left:742px;top:286px;width:310px;height:28px;border:1px solid #7d7d7d;box-sizing:border-box;background:#fff"></div>
<svg style="position:absolute;left:1061px;top:291.3px" width="18" height="18" viewBox="0 0 18 18"><circle cx="8.5" cy="8.6" r="7.75" fill="#fff" stroke="#557a98" stroke-width="1.4"/><path d="M6.4 8.0 L11.4 12.0" stroke="#1f70c4" stroke-width="1.6" stroke-linecap="round"/><path d="M4.3 6.0 Q4.4 8.4 6.5 8.3 Q7.6 7.0 6.6 4.9" fill="none" stroke="#1f70c4" stroke-width="1.4"/><path d="M4.4 12.5 L7.2 9.7" stroke="#5aa4e8" stroke-width="1.1" stroke-dasharray="1.2 0.8"/><path d="M9.0 8.0 L11.5 5.3" stroke="#1f70c4" stroke-width="2.1" stroke-linecap="round"/></svg>
<svg style="position:absolute;left:1086px;top:297.5px" width="11" height="6" viewBox="0 0 11 6"><path d="M0.1 0.3 L9.7 0.3 L4.9 5.4 Z" fill="#111"/></svg>
<div class="t" style="left:519.22px;top:329px;font-size:16px;line-height:16px;font-weight:700;color:#111;transform:scaleX(0.9752);">EcuMModuleParameter*</div>
<div style="position:absolute;left:741px;top:323px;width:311px;height:25px;border:1px solid #b8c4d2;box-sizing:border-box;background:#fff"></div>
<div style="position:absolute;left:1030px;top:324px;width:21px;height:23px;background:#efefef"></div>
<svg style="position:absolute;left:1035px;top:332.0px" width="12" height="8" viewBox="0 0 12 8"><path d="M1.3 1.4 L6 5.9 L10.7 1.4" fill="none" stroke="#5a5a5a" stroke-width="1.6"/></svg>
<div class="t" style="left:745.94px;top:327px;font-size:16px;line-height:16px;font-weight:400;color:#303030;transform:scaleX(0.8598);">POSTBUILD_PTR</div>
<svg style="position:absolute;left:1061px;top:326.8px" width="18" height="18" viewBox="0 0 18 18"><circle cx="8.5" cy="8.6" r="7.75" fill="#fff" stroke="#557a98" stroke-width="1.4"/><path d="M6.4 8.0 L11.4 12.0" stroke="#1f70c4" stroke-width="1.6" stroke-linecap="round"/><path d="M4.3 6.0 Q4.4 8.4 6.5 8.3 Q7.6 7.0 6.6 4.9" fill="none" stroke="#1f70c4" stroke-width="1.4"/><path d="M4.4 12.5 L7.2 9.7" stroke="#5aa4e8" stroke-width="1.1" stroke-dasharray="1.2 0.8"/><path d="M9.0 8.0 L11.5 5.3" stroke="#1f70c4" stroke-width="2.1" stroke-linecap="round"/></svg>
<svg style="position:absolute;left:1086px;top:333.0px" width="11" height="6" viewBox="0 0 11 6"><path d="M0.1 0.3 L9.7 0.3 L4.9 5.4 Z" fill="#111"/></svg>
<div class="t" style="left:519.24px;top:365px;font-size:16px;line-height:16px;font-weight:400;color:#303030;transform:scaleX(0.9566);">EcuMModuleService</div>
<div style="position:absolute;left:742px;top:358px;width:310px;height:28px;border:1px solid #7d7d7d;box-sizing:border-box;background:#fff"></div>
<div class="t" style="left:748.55px;top:365px;font-size:16px;line-height:16px;font-weight:400;color:#303030;transform:scaleX(1.0527);">Init</div>
<svg style="position:absolute;left:1061px;top:363.3px" width="18" height="18" viewBox="0 0 18 18"><circle cx="8.5" cy="8.6" r="7.75" fill="#fff" stroke="#557a98" stroke-width="1.4"/><path d="M6.4 8.0 L11.4 12.0" stroke="#1f70c4" stroke-width="1.6" stroke-linecap="round"/><path d="M4.3 6.0 Q4.4 8.4 6.5 8.3 Q7.6 7.0 6.6 4.9" fill="none" stroke="#1f70c4" stroke-width="1.4"/><path d="M4.4 12.5 L7.2 9.7" stroke="#5aa4e8" stroke-width="1.1" stroke-dasharray="1.2 0.8"/><path d="M9.0 8.0 L11.5 5.3" stroke="#1f70c4" stroke-width="2.1" stroke-linecap="round"/></svg>
<svg style="position:absolute;left:1086px;top:369.5px" width="11" height="6" viewBox="0 0 11 6"><path d="M0.1 0.3 L9.7 0.3 L4.9 5.4 Z" fill="#111"/></svg>
<div class="t" style="left:519.23px;top:403px;font-size:16px;line-height:16px;font-weight:400;color:#303030;transform:scaleX(0.9663);">EcuMRbDriverInitCoreId</div>
<div style="position:absolute;left:742px;top:396px;width:310px;height:28px;border:1px solid #7d7d7d;box-sizing:border-box;background:#fff"></div>
<svg style="position:absolute;left:1061px;top:401.3px" width="18" height="18" viewBox="0 0 18 18"><circle cx="8.5" cy="8.6" r="7.75" fill="#fff" stroke="#557a98" stroke-width="1.4"/><path d="M6.4 8.0 L11.4 12.0" stroke="#1f70c4" stroke-width="1.6" stroke-linecap="round"/><path d="M4.3 6.0 Q4.4 8.4 6.5 8.3 Q7.6 7.0 6.6 4.9" fill="none" stroke="#1f70c4" stroke-width="1.4"/><path d="M4.4 12.5 L7.2 9.7" stroke="#5aa4e8" stroke-width="1.1" stroke-dasharray="1.2 0.8"/><path d="M9.0 8.0 L11.5 5.3" stroke="#1f70c4" stroke-width="2.1" stroke-linecap="round"/></svg>
<svg style="position:absolute;left:1086px;top:407.5px" width="11" height="6" viewBox="0 0 11 6"><path d="M0.1 0.3 L9.7 0.3 L4.9 5.4 Z" fill="#111"/></svg>
<div class="t" style="left:519.22px;top:438px;font-size:16px;line-height:16px;font-weight:400;color:#303030;transform:scaleX(0.9812);">EcuMRbMonitoringCapable</div>
<div style="position:absolute;left:741px;top:433px;width:311px;height:25px;border:1px solid #b8c4d2;box-sizing:border-box;background:#fff"></div>
<div style="position:absolute;left:1030px;top:434px;width:21px;height:23px;background:#efefef"></div>
<svg style="position:absolute;left:1035px;top:442.0px" width="12" height="8" viewBox="0 0 12 8"><path d="M1.3 1.4 L6 5.9 L10.7 1.4" fill="none" stroke="#5a5a5a" stroke-width="1.6"/></svg>
<svg style="position:absolute;left:1061px;top:436.8px" width="18" height="18" viewBox="0 0 18 18"><circle cx="8.5" cy="8.6" r="7.75" fill="#fff" stroke="#557a98" stroke-width="1.4"/><path d="M6.4 8.0 L11.4 12.0" stroke="#1f70c4" stroke-width="1.6" stroke-linecap="round"/><path d="M4.3 6.0 Q4.4 8.4 6.5 8.3 Q7.6 7.0 6.6 4.9" fill="none" stroke="#1f70c4" stroke-width="1.4"/><path d="M4.4 12.5 L7.2 9.7" stroke="#5aa4e8" stroke-width="1.1" stroke-dasharray="1.2 0.8"/><path d="M9.0 8.0 L11.5 5.3" stroke="#1f70c4" stroke-width="2.1" stroke-linecap="round"/></svg>
<svg style="position:absolute;left:1086px;top:443.0px" width="11" height="6" viewBox="0 0 11 6"><path d="M0.1 0.3 L9.7 0.3 L4.9 5.4 Z" fill="#111"/></svg>
<div class="t" style="left:519.26px;top:474px;font-size:16px;line-height:16px;font-weight:400;color:#303030;transform:scaleX(0.9408);">EcuMRbSequenceID</div>
<div style="position:absolute;left:742px;top:468px;width:310px;height:28px;border:1px solid #7d7d7d;box-sizing:border-box;background:#fff"></div>
<svg style="position:absolute;left:1061px;top:473.3px" width="18" height="18" viewBox="0 0 18 18"><circle cx="8.5" cy="8.6" r="7.75" fill="#fff" stroke="#557a98" stroke-width="1.4"/><path d="M6.4 8.0 L11.4 12.0" stroke="#1f70c4" stroke-width="1.6" stroke-linecap="round"/><path d="M4.3 6.0 Q4.4 8.4 6.5 8.3 Q7.6 7.0 6.6 4.9" fill="none" stroke="#1f70c4" stroke-width="1.4"/><path d="M4.4 12.5 L7.2 9.7" stroke="#5aa4e8" stroke-width="1.1" stroke-dasharray="1.2 0.8"/><path d="M9.0 8.0 L11.5 5.3" stroke="#1f70c4" stroke-width="2.1" stroke-linecap="round"/></svg>
<svg style="position:absolute;left:1086px;top:479.5px" width="11" height="6" viewBox="0 0 11 6"><path d="M0.1 0.3 L9.7 0.3 L4.9 5.4 Z" fill="#111"/></svg>
<div class="t" style="left:519.43px;top:550px;font-size:16px;line-height:16px;font-weight:400;color:#303030;transform:scaleX(0.9675);text-decoration:underline">EcuMModuleRef</div>
<div style="position:absolute;left:665px;top:544px;width:312px;height:26px;border:1px solid #b8c4d2;box-sizing:border-box;background:#fff"></div>
<div style="position:absolute;left:955px;top:545px;width:21px;height:24px;background:#efefef"></div>
<svg style="position:absolute;left:960px;top:553.5px" width="12" height="8" viewBox="0 0 12 8"><path d="M1.3 1.4 L6 5.9 L10.7 1.4" fill="none" stroke="#5a5a5a" stroke-width="1.6"/></svg>
<div class="t" style="left:670.50px;top:549px;font-size:16px;line-height:16px;font-weight:400;color:#303030;transform:scaleX(0.9844);">Wdg</div>
<svg style="position:absolute;left:985px;top:548.5px" width="18" height="18" viewBox="0 0 18 18"><circle cx="8.5" cy="8.6" r="7.75" fill="#fff" stroke="#557a98" stroke-width="1.4"/><path d="M6.4 8.0 L11.4 12.0" stroke="#1f70c4" stroke-width="1.6" stroke-linecap="round"/><path d="M4.3 6.0 Q4.4 8.4 6.5 8.3 Q7.6 7.0 6.6 4.9" fill="none" stroke="#1f70c4" stroke-width="1.4"/><path d="M4.4 12.5 L7.2 9.7" stroke="#5aa4e8" stroke-width="1.1" stroke-dasharray="1.2 0.8"/><path d="M9.0 8.0 L11.5 5.3" stroke="#1f70c4" stroke-width="2.1" stroke-linecap="round"/></svg>
<svg style="position:absolute;left:1010px;top:555px" width="11" height="6" viewBox="0 0 11 6"><path d="M0.1 0.3 L9.7 0.3 L4.9 5.4 Z" fill="#111"/></svg>
<div style="position:absolute;left:1105px;top:0px;width:34px;height:589px;background:#fff"></div>
<div style="position:absolute;left:0px;top:576px;width:1139px;height:13px;background:#fff"></div>
</div></body></html>
